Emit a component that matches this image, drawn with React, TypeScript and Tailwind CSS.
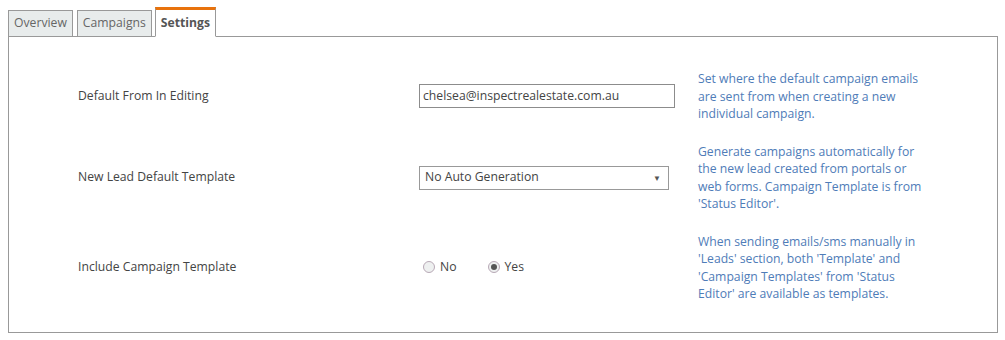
import React from 'react';

const rows = [
  {
    label: 'Default From In Editing',
    help: 'Set where the default campaign emails are sent from when creating a new individual campaign.',
    kind: 'input',
  },
  {
    label: 'New Lead Default Template',
    help: "Generate campaigns automatically for the new lead created from portals or web forms. Campaign Template is from 'Status Editor'.",
    kind: 'select',
  },
  {
    label: 'Include Campaign Template',
    help: "When sending emails/sms manually in 'Leads' section, both 'Template' and 'Campaign Templates' from 'Status Editor' are available as templates.",
    kind: 'radio',
  },
];

function Radio({ checked, label }: { checked?: boolean; label: string }) {
  return (
    <label className="flex items-center gap-[5px] text-[#444]">
      <span className="flex h-[12px] w-[12px] items-center justify-center rounded-full border border-[#b8a9b6] bg-[#eef0f0]">
        {checked && <span className="h-[6px] w-[6px] rounded-full bg-[#555]" />}
      </span>
      {label}
    </label>
  );
}

function Control({ kind }: { kind: string }) {
  if (kind === 'input') {
    return (
      <div className="flex h-[24px] w-[256px] items-center border border-[#8c8c8c] bg-white px-[3px] text-[#444]">
        chelsea@inspectrealestate.com.au
      </div>
    );
  }
  if (kind === 'select') {
    return (
      <div className="flex h-[24px] w-[250px] items-center justify-between border border-[#999] bg-white pl-[5px] pr-[7px] text-[#444]">
        <span>No Auto Generation</span>
        <span className="text-[8px] text-[#555]">▼</span>
      </div>
    );
  }
  return (
    <div className="flex items-center gap-[31px] pl-[4px]">
      <Radio label="No" />
      <Radio checked label="Yes" />
    </div>
  );
}

export default function App() {
  return (
    <div
      className="h-[340px] w-[1005px] bg-white pl-[8px] pt-[7px] text-[12.2px]"
      style={{ fontFamily: '"Open Sans", "Noto Sans", sans-serif' }}
    >
      {/* Tabs */}
      <div className="flex items-end gap-[4px]">
        <div className="-mb-px flex h-[27px] items-center border border-[#999] bg-[#e8ecec] px-[5px] text-[#666]">
          Overview
        </div>
        <div className="-mb-px flex h-[27px] items-center border border-[#999] bg-[#e8ecec] px-[5px] text-[#666]">
          Campaigns
        </div>
        <div className="-mb-px -ml-px flex h-[30px] items-center border-x border-b border-t-[3px] border-[#999] border-t-[#e8720c] border-b-white bg-white px-[5px] font-bold text-[#555]">
          Settings
        </div>
      </div>

      {/* Panel */}
      <div className="flex h-[297px] w-[990px] flex-col gap-[20px] border border-[#999] pb-[30px] pl-[69px] pt-[33px]">
        {rows.map((r) => (
          <div key={r.label} className="flex items-center">
            <div className="w-[341px] text-[#444]">{r.label}</div>
            <div className="w-[279px]">
              <Control kind={r.kind} />
            </div>
            <div className="w-[228px] leading-[17.5px] text-[#4f7cb8]">{r.help}</div>
          </div>
        ))}
      </div>
    </div>
  );
}
